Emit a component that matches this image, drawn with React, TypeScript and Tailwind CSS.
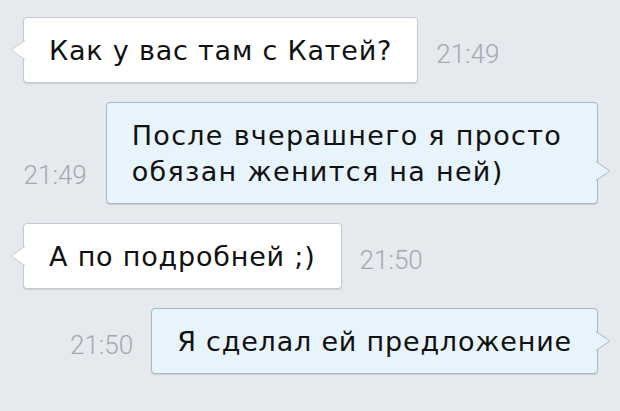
import React from "react";

const FONT = { fontFamily: '"DejaVu Sans", "Noto Sans", sans-serif' };
const TFONT = { fontFamily: 'Roboto, "Noto Sans", sans-serif' };

function TailLeft() {
  return (
    <svg
      className="absolute left-[-13px] bottom-[22px]"
      width="14"
      height="20"
      viewBox="0 0 14 20"
    >
      <path d="M14 0 L1.5 9 Q0 10 1.5 11 L14 20 Z" fill="#ffffff" />
      <path d="M14 0.5 L1.5 9 Q0 10 1.5 11 L14 19.5" fill="none" stroke="#c3cad1" strokeWidth="1" />
    </svg>
  );
}

function TailRight() {
  return (
    <svg
      className="absolute right-[-13px] bottom-[22px]"
      width="14"
      height="20"
      viewBox="0 0 14 20"
    >
      <path d="M0 0 L12.5 9 Q14 10 12.5 11 L0 20 Z" fill="#e8f4fb" />
      <path d="M0 0.5 L12.5 9 Q14 10 12.5 11 L0 19.5" fill="none" stroke="#a8b9c6" strokeWidth="1" />
    </svg>
  );
}

function In({ children }: { children: React.ReactNode }) {
  return (
    <div
      className="relative rounded-[4px] border border-[#c3cad1] bg-white px-[25px] pt-[15px] pb-[13px] text-[27px] leading-[36px] tracking-[0.8px] text-[#111111] shadow-[0_1px_1px_rgba(0,0,0,0.12)] whitespace-nowrap"
      style={FONT}
    >
      {children}
      <TailLeft />
    </div>
  );
}

function Out({ children, wide }: { children: React.ReactNode; wide?: boolean }) {
  return (
    <div
      className={
        wide
          ? "relative rounded-[4px] border border-[#a8b9c6] bg-[#e8f4fb] pl-[25px] pr-[35px] pt-[15px] pb-[13px] text-[27px] leading-[36px] tracking-[1.3px] text-[#111111] shadow-[0_1px_1px_rgba(0,0,0,0.12)] whitespace-nowrap"
          : "relative rounded-[4px] border border-[#a8b9c6] bg-[#e8f4fb] px-[25px] pt-[15px] pb-[13px] text-[27px] leading-[36px] tracking-[0.8px] text-[#111111] shadow-[0_1px_1px_rgba(0,0,0,0.12)] whitespace-nowrap"
      }
      style={FONT}
    >
      {children}
      <TailRight />
    </div>
  );
}

function Time({ t }: { t: string }) {
  return (
    <div
      className="pb-[16px] text-[26px] leading-[26px] font-light text-[#a3a9b0]"
      style={TFONT}
    >
      {t}
    </div>
  );
}

export default function App() {
  return (
    <div className="w-[620px] h-[411px] overflow-hidden bg-[#e6eaee] flex flex-col gap-[19px] pt-[17px] pl-[23px] pr-[22px]">
      <div className="flex items-end gap-[18px]">
        <In>Как у вас там с Катей?</In>
        <Time t="21:49" />
      </div>
      <div className="flex items-end justify-end gap-[19px]">
        <Time t="21:49" />
        <Out wide>
          После вчерашнего я просто
          <br />
          обязан женится на ней)
        </Out>
      </div>
      <div className="flex items-end gap-[18px]">
        <In>А по подробней ;)</In>
        <Time t="21:50" />
      </div>
      <div className="flex items-end justify-end gap-[18px]">
        <Time t="21:50" />
        <Out>Я сделал ей предложение</Out>
      </div>
    </div>
  );
}
